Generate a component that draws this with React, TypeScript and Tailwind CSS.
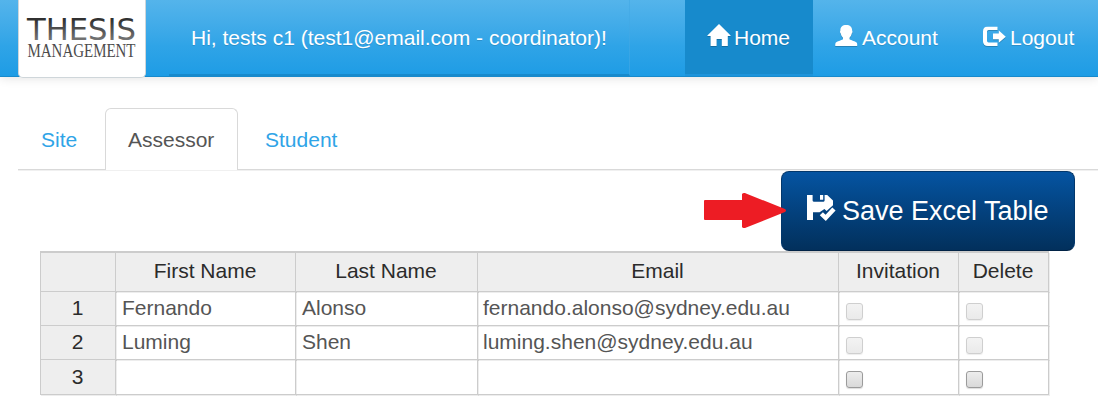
import type { ReactNode } from "react";

const HomeIcon = () => (
  <svg width="24" height="23" viewBox="0 0 24 23" className="shrink-0 -translate-y-[3px] fill-white drop-shadow-[0_1.5px_0_rgba(0,0,0,0.2)]">
    <path d="M12 0 L23.6 11.4 V12 H20.8 V22 H14.8 V15 H9.6 V22 H3.6 V12 H.4 V11.4 Z" />
  </svg>
);

const UserIcon = () => (
  <svg width="23" height="22" viewBox="0 0 23 22" className="shrink-0 -translate-y-[2px] fill-white drop-shadow-[0_1.5px_0_rgba(0,0,0,0.2)]">
    <path d="M11.2 0 C14.9 0 17.3 1.9 17.1 5.6 C17.7 6.1 17.5 8.1 16.7 8.6 C16.4 10.5 15.6 11.8 14.5 12.7 V14.2 C16.2 15.4 20.6 16.2 21.8 17.8 C22.3 18.5 22.3 20.1 22.2 21 H.3 C.2 20.1 .2 18.5 .7 17.8 C1.9 16.2 6.3 15.4 8 14.2 V12.7 C6.9 11.8 6.1 10.5 5.8 8.6 C5 8.1 4.8 6.1 5.4 5.6 C5.2 1.9 7.5 0 11.2 0Z" />
  </svg>
);

const LogoutIcon = () => (
  <svg width="23" height="21" viewBox="0 0 23 21" className="shrink-0 -translate-y-[1.5px] fill-white drop-shadow-[0_1.5px_0_rgba(0,0,0,0.2)]">
    <path d="M14.5 0 V3.4 H5.6 Q4 3.4 4 5 V14.3 Q4 15.9 5.6 15.9 H14.5 V19.5 H5 Q0 19.5 0 14.7 V4.8 Q0 0 5 0Z" />
    <path d="M15.8 4 L22.8 10.3 L15.8 16.3 V12.8 H10 V6.9 H15.8Z" />
  </svg>
);

const SavedIcon = () => (
  <svg width="29" height="27" viewBox="0 0 29 27" className="shrink-0">
    <path fill="#fff" d="M0 0 H5.6 V5.6 Q5.6 6.7 6.7 6.7 H16.6 Q17.6 6.7 17.6 5.6 V0 H20.2 L26 5.4 V10.2 L19.6 16 L17.4 14 L12.6 17.2 H6 V25 H0Z M13 0 H16.2 V4.7 H13Z" />
    <path fill="#fff" d="M12.8 20.2 L15.9 17.3 L18.6 19.8 L25.3 12.6 L28.6 15.4 L18.8 26 Z" />
  </svg>
);

const NavItem = ({ icon, label, className }: { icon: ReactNode; label: string; className: string }) => (
  <a className={`flex h-[76px] items-center whitespace-nowrap text-[21px] text-white [text-shadow:0_1px_0_rgba(0,0,0,0.15)] ${className}`}>
    {icon}
    <span className="leading-[76px]">{label}</span>
  </a>
);

const Check = ({ disabled }: { disabled: boolean }) => (
  <span
    className={`mt-[11px] ml-[7px] block h-[17px] w-[17px] rounded-[3px] border ${
      disabled
        ? "border-[#cfcfcf] bg-linear-to-b from-[#f3f3f3] to-[#eaeaea] shadow-[0_1px_1px_#eeeeee]"
        : "border-[#9b9b9b] bg-linear-to-b from-[#ededed] to-[#d9d9d9] shadow-[0_1px_1px_#dddddd]"
    }`}
  />
);

const rows = [
  { first: "Fernando", last: "Alonso", email: "fernando.alonso@sydney.edu.au", disabled: true },
  { first: "Luming", last: "Shen", email: "luming.shen@sydney.edu.au", disabled: true },
  { first: "", last: "", email: "", disabled: false },
];

const headers = ["", "First Name", "Last Name", "Email", "Invitation", "Delete"];
const line = "border-r border-b border-[#cccccc] shadow-[0.5px_0.5px_0_0.5px_rgba(0,0,0,0.07)]";

export default function App() {
  return (
    <div className="h-[417px] w-[1098px] overflow-hidden bg-white font-['Liberation_Sans',Arial,sans-serif] text-[21px] text-[#555555]">
      <header className="flex h-[77px] border-b border-[#178acc] bg-linear-to-b from-[#54b4eb] via-[#2fa4e7] via-60% to-[#1d9ce5] pl-[18px] shadow-[0_1px_10px_rgba(0,0,0,0.12)]">
        <a className="h-[78px] w-[128px] shrink-0 rounded-b-[5px] border-x border-b border-[#cfd6da] bg-white">
          <svg width="126" height="76" viewBox="0 0 126 76" className="block overflow-visible">
            <defs>
              <linearGradient id="steel" x1="0" y1="0" x2="0" y2="1">
                <stop offset="0.2" stopColor="#303030" />
                <stop offset="1" stopColor="#8a8a8a" />
              </linearGradient>
            </defs>
            <text x="8" y="39.5" fontSize="29.5" textLength="109" lengthAdjust="spacingAndGlyphs" fontFamily="DejaVu Sans, sans-serif" fill="url(#steel)">THESIS</text>
            <text x="8.5" y="56.5" fontSize="18.5" textLength="108" lengthAdjust="spacingAndGlyphs" fontFamily="Liberation Serif, serif" fill="#4c4c4c">MANAGEMENT</text>
          </svg>
        </a>
        <p className="ml-[23px] h-[76px] w-[461px] border-r border-b-2 border-r-[#43a9e4]/60 border-b-[#178acc] pl-[22px] text-[21px] leading-[76px] whitespace-nowrap text-white [text-shadow:0_1px_0_rgba(0,0,0,0.15)]">
          Hi, tests c1 (test1@email.com - coordinator)!
        </p>
        <nav className="ml-[55px] flex">
          <NavItem icon={<HomeIcon />} label="Home" className="w-[128px] gap-[3px] border-b-2 border-[#1d94db] bg-[#178acc] pt-[2px] pl-[22px]" />
          <NavItem icon={<UserIcon />} label="Account" className="w-[148px] gap-[4px] pl-[22px]" />
          <NavItem icon={<LogoutIcon />} label="Logout" className="w-[120px] gap-[4px] pl-[22px]" />
        </nav>
      </header>

      <main>
        <div className="ml-[18px] flex h-[94px] items-end border-b border-[#f0f0f0]">
          <div className="flex h-[62px] w-full leading-[62px]">
            <a className="w-[87px] border-b border-[#d9d9d9] pt-px pl-[23px] text-[#2fa4e7]">Site</a>
            <a className="w-[133px] rounded-t-[6px] border-x border-t border-[#d9d9d9] pl-[22px]">Assessor</a>
            <a className="flex-1 border-b border-[#d9d9d9] pt-px pl-[27px] text-[#2fa4e7]">Student</a>
          </div>
        </div>

        <div className="relative flex h-[80px] items-center justify-end pr-[23px]">
          <button className="flex h-[80px] w-[294px] items-center gap-[6px] rounded-[8px] border border-[#02376c] border-b-[#012346] bg-linear-to-b from-[#0554a2] to-[#02305c] pl-[25px] text-[27px] whitespace-nowrap text-white">
            <span className="-mt-[5px]"><SavedIcon /></span>
            <span className="leading-[78px]">Save Excel Table</span>
          </button>
          <svg className="absolute top-[21px] left-[703px] z-10" width="84" height="38" viewBox="0 0 84 38">
            <path fill="#ed1c24" d="M2 19 H39 V13 Q40 11.5 42 12 L43 12.5 L82 28 Q84 29.5 82 31 L42 47 Q39 47 39 45.5 V39 H2 Q1 39 1 38 V20 Q1 19 2 19Z" transform="translate(0 -11)" />
          </svg>
        </div>

        <div className="ml-[40px] grid w-[1009px] grid-cols-[75px_180px_182px_361px_120px_90px] grid-rows-[39px_34px_34px_35px] border-t-2 border-l border-[#cccccc]">
          {headers.map((h, i) => (
            <div key={i} className={`${line} bg-[#eeeeee] pr-px text-center leading-[36px] text-[#2b2b2b]`}>{h}</div>
          ))}
          {rows.map((r, i) => (
            <div key={i} className="contents">
              <div className={`${line} bg-[#eeeeee] pr-px text-center text-[#2b2b2b] ${i === 2 ? "leading-[34px]" : "leading-[32px]"}`}>{i + 1}</div>
              <div className={`${line} pl-[6px] leading-[32px]`}>{r.first}</div>
              <div className={`${line} pl-[6px] leading-[32px]`}>{r.last}</div>
              <div className={`${line} pl-[5px] leading-[32px]`}>{r.email}</div>
              <div className={line}><Check disabled={r.disabled} /></div>
              <div className={line}><Check disabled={r.disabled} /></div>
            </div>
          ))}
        </div>
      </main>
    </div>
  );
}
